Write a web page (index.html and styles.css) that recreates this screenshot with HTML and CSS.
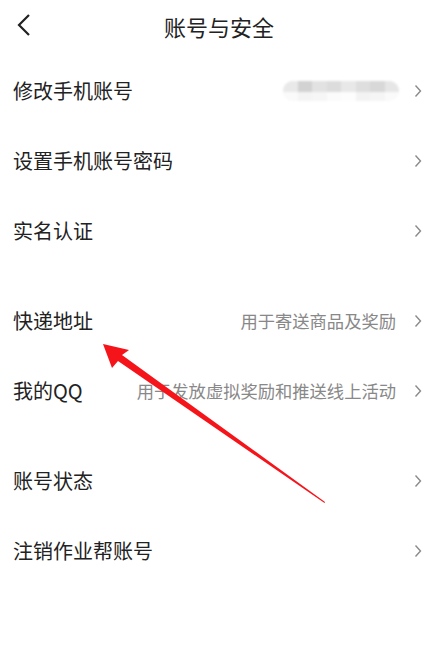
FILE: index.html
```html
<!DOCTYPE html>
<html lang="zh-CN">
<head>
<meta charset="utf-8">
<title>账号与安全</title>
<link rel="stylesheet" href="styles.css">
</head>
<body>
<div class="page">
  <header class="topbar">
    <svg class="back" width="14" height="24" viewBox="0 0 14 24"><path d="M12 2 L2 12 L12 22" fill="none" stroke="#222" stroke-width="2.2" stroke-linejoin="miter"/></svg>
    <h1 class="title">账号与安全</h1>
  </header>

  <section class="group">
    <div class="row">
      <span class="label">修改手机账号</span>
      <span class="blur">
        <span class="b b1"></span><span class="b b2"></span><span class="b b3"></span><span class="b b4"></span><span class="b b5"></span><span class="b b6"></span><span class="b b7"></span><span class="b b8"></span>
      </span>
      <svg class="chev" width="8" height="14" viewBox="0 0 8 14"><path d="M1.5 1.5 L6.5 7 L1.5 12.5" fill="none" stroke="#8a8a8a" stroke-width="1.4"/></svg>
    </div>
    <div class="row">
      <span class="label">设置手机账号密码</span>
      <svg class="chev" width="8" height="14" viewBox="0 0 8 14"><path d="M1.5 1.5 L6.5 7 L1.5 12.5" fill="none" stroke="#8a8a8a" stroke-width="1.4"/></svg>
    </div>
    <div class="row">
      <span class="label">实名认证</span>
      <svg class="chev" width="8" height="14" viewBox="0 0 8 14"><path d="M1.5 1.5 L6.5 7 L1.5 12.5" fill="none" stroke="#8a8a8a" stroke-width="1.4"/></svg>
    </div>
  </section>

  <section class="group">
    <div class="row">
      <span class="label">快递地址</span>
      <span class="sub">用于寄送商品及奖励</span>
      <svg class="chev" width="8" height="14" viewBox="0 0 8 14"><path d="M1.5 1.5 L6.5 7 L1.5 12.5" fill="none" stroke="#8a8a8a" stroke-width="1.4"/></svg>
    </div>
    <div class="row">
      <span class="label">我的QQ</span>
      <span class="sub">用于发放虚拟奖励和推送线上活动</span>
      <svg class="chev" width="8" height="14" viewBox="0 0 8 14"><path d="M1.5 1.5 L6.5 7 L1.5 12.5" fill="none" stroke="#8a8a8a" stroke-width="1.4"/></svg>
    </div>
  </section>

  <section class="group">
    <div class="row">
      <span class="label">账号状态</span>
      <svg class="chev" width="8" height="14" viewBox="0 0 8 14"><path d="M1.5 1.5 L6.5 7 L1.5 12.5" fill="none" stroke="#8a8a8a" stroke-width="1.4"/></svg>
    </div>
    <div class="row">
      <span class="label">注销作业帮账号</span>
      <svg class="chev" width="8" height="14" viewBox="0 0 8 14"><path d="M1.5 1.5 L6.5 7 L1.5 12.5" fill="none" stroke="#8a8a8a" stroke-width="1.4"/></svg>
    </div>
  </section>

  <svg class="arrow" width="438" height="663" viewBox="0 0 438 663">
    <path d="M103 344 L129 350 L122 355 L325 502 L324.5 503 L118 361 L112 368 Z" fill="#f5141a"/>
  </svg>
</div>
</body>
</html>
```

FILE: styles.css
```css
* { box-sizing: border-box; margin: 0; padding: 0; }
html, body { background: #fff; }
body {
  font-family: "Noto Sans CJK SC", "Noto Sans", sans-serif;
  color: #222;
}
.page {
  position: relative;
  width: 438px;
  height: 663px;
  overflow: hidden;
  background: #fff;
}
.topbar {
  height: 56px;
  display: flex;
  align-items: center;
  justify-content: center;
  position: relative;
}
.back {
  position: absolute;
  left: 17px;
  top: 13px;
}
.title {
  font-size: 22px;
  font-weight: 400;
  color: #222;
  line-height: 1;
  margin-top: -4px;
}
.group { display: flex; flex-direction: column; }
.group + .group { margin-top: 20px; }
.row {
  height: 70px;
  display: flex;
  align-items: center;
  padding: 0 16px 0 13px;
}
.label {
  font-size: 20px;
  line-height: 1;
  color: #222;
  flex: 1;
  white-space: nowrap;
}
.sub {
  font-size: 17.3px;
  line-height: 1;
  color: #888;
  margin-right: 18px;
  white-space: nowrap;
}
.chev { display: block; flex: none; }
.blur {
  display: flex;
  width: 116px;
  height: 20px;
  border-radius: 10px;
  overflow: hidden;
  margin-right: 15px;
  filter: blur(1.2px);
  background: linear-gradient(#e6e6e6 0 50%, #f7f7f7 50% 100%);
}
.b { flex: 1; height: 100%; }
.b1 { background: linear-gradient(#e9e9e9 0 55%, #fafafa 55%); }
.b2 { background: linear-gradient(#d2d2d2 0 55%, #f4f4f4 55%); }
.b3 { background: linear-gradient(#e2e2e2 0 55%, #f6f6f6 55%); }
.b4 { background: linear-gradient(#dcdcdc 0 55%, #fbfbfb 55%); }
.b5 { background: linear-gradient(#e8e8e8 0 55%, #fdfdfd 55%); }
.b6 { background: linear-gradient(#dedede 0 55%, #f3f3f3 55%); }
.b7 { background: linear-gradient(#d8d8d8 0 55%, #f5f5f5 55%); }
.b8 { background: linear-gradient(#e6e6e6 0 55%, #fafafa 55%); }
.arrow {
  position: absolute;
  left: 0;
  top: 0;
  pointer-events: none;
}
```
